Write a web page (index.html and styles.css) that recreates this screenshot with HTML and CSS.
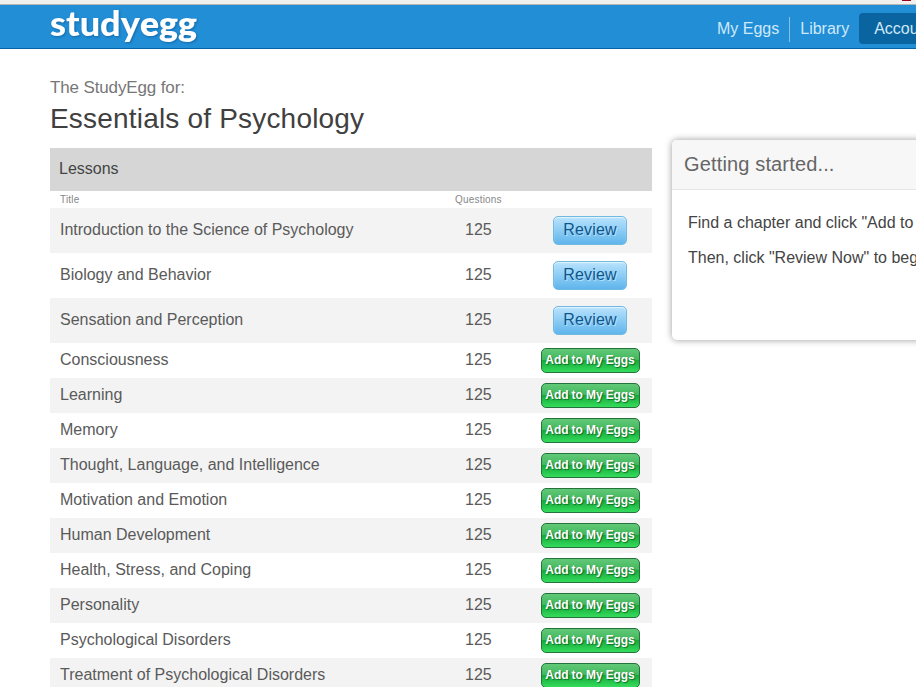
FILE: index.html
```html
<!DOCTYPE html>
<html lang="en">
<head>
<meta charset="utf-8">
<title>Essentials of Psychology - StudyEgg</title>
<link rel="stylesheet" href="styles.css">
</head>
<body>
<div class="chrome"><span class="chrome-mark"></span></div>
<header class="topbar">
  <a class="logo"><svg width="150" height="43" viewBox="0 0 150 43" role="img" aria-label="studyegg">
    <text class="logo-study" x="0" y="31" textLength="90" lengthAdjust="spacingAndGlyphs">study</text>
    <text class="logo-egg" x="90" y="31" textLength="57" lengthAdjust="spacingAndGlyphs">egg</text>
  </svg></a>
  <nav class="nav">
    <a class="nav-link">My Eggs</a>
    <a class="nav-link nav-divided">Library</a>
    <a class="account">Account</a>
  </nav>
</header>
<main class="page">
  <section class="course">
    <p class="kicker">The StudyEgg for:</p>
    <h1>Essentials of Psychology</h1>
    <h2>Lessons</h2>
    <div class="row labels"><span>Title</span><span>Questions</span></div>
    <div class="row tall"><span>Introduction to the Science of Psychology</span><span class="count">125</span><a class="review">Review</a></div>
    <div class="row tall"><span>Biology and Behavior</span><span class="count">125</span><a class="review">Review</a></div>
    <div class="row tall"><span>Sensation and Perception</span><span class="count">125</span><a class="review">Review</a></div>
    <div class="row"><span>Consciousness</span><span class="count">125</span><a class="add">Add to My Eggs</a></div>
    <div class="row"><span>Learning</span><span class="count">125</span><a class="add">Add to My Eggs</a></div>
    <div class="row"><span>Memory</span><span class="count">125</span><a class="add">Add to My Eggs</a></div>
    <div class="row"><span>Thought, Language, and Intelligence</span><span class="count">125</span><a class="add">Add to My Eggs</a></div>
    <div class="row"><span>Motivation and Emotion</span><span class="count">125</span><a class="add">Add to My Eggs</a></div>
    <div class="row"><span>Human Development</span><span class="count">125</span><a class="add">Add to My Eggs</a></div>
    <div class="row"><span>Health, Stress, and Coping</span><span class="count">125</span><a class="add">Add to My Eggs</a></div>
    <div class="row"><span>Personality</span><span class="count">125</span><a class="add">Add to My Eggs</a></div>
    <div class="row"><span>Psychological Disorders</span><span class="count">125</span><a class="add">Add to My Eggs</a></div>
    <div class="row"><span>Treatment of Psychological Disorders</span><span class="count">125</span><a class="add">Add to My Eggs</a></div>
  </section>
  <aside class="panel">
    <h3>Getting started...</h3>
    <div class="panel-body">
      <p>Find a chapter and click "Add to My Eggs"</p>
      <p>Then, click "Review Now" to begin</p>
    </div>
  </aside>
</main>
</body>
</html>
```
FILE: styles.css
```css
* { box-sizing: border-box; }
html, body { height: 687px; overflow: hidden; }
body { margin: 0; background: #fff; font: 16px/20px "Liberation Sans", Arial, sans-serif; color: #5a5a5a; }
h1, h2, h3, p { margin: 0; font-weight: normal; }
.chrome { height: 5px; background: #f0f0ee; border-bottom: 1px solid #b5b5b3; display: flex; justify-content: flex-end; }
.chrome-mark { width: 9px; height: 1px; margin-right: 5px; background: #a00020; }
.topbar { display: flex; justify-content: space-between; height: 44px; padding-left: 50px; background: #218ed6; border-bottom: 1px solid #0763a8; overflow: hidden; }
.logo svg { display: block; overflow: visible; filter: drop-shadow(1px 1px 1px rgba(0, 50, 100, .4)); }
.logo-study { font: 900 34px Lato, sans-serif; fill: #fff; }
.logo-egg { font: 800 34px Lato, sans-serif; fill: #fff; }
.nav { display: flex; flex: none; align-items: flex-start; width: 209px; padding-top: 8px; white-space: nowrap; color: #cfe9fa; }
.nav-link { flex: none; height: 25px; margin-top: 4px; padding: 2px 10px; line-height: 20px; }
.nav-divided { border-left: 1px solid #84c1ea; }
.account { flex: none; width: 90px; height: 31px; padding: 6px 15px; line-height: 19px; background: #0a649f; border-radius: 4px; }
.page { display: flex; align-items: flex-start; padding-left: 50px; }
.course { flex: none; width: 602px; padding-top: 29px; }
.kicker { font-size: 17px; letter-spacing: -.13px; color: #777; }
h1 { height: 50px; padding-top: 3px; font-size: 28px; line-height: 36px; letter-spacing: .19px; color: #404040; }
h2 { height: 43px; padding: 0 9px; font-size: 16px; line-height: 41px; color: #444; background: #d6d6d6; }
.row { display: grid; grid-template-columns: 395px 79px 112px; align-items: center; height: 35px; padding-left: 10px; line-height: 20px; }
.row:nth-of-type(even) { background: #f3f3f3; }
.row.tall { height: 45px; }
.row > span { padding-bottom: 1px; }
.row.labels { height: 17px; font-size: 10px; line-height: 17px; letter-spacing: .2px; color: #888; }
.row.labels > span { padding-bottom: 0; }
.row > .count { padding-left: 10px; }
.row > span:first-child { white-space: nowrap; }
.row .review, .row .add { justify-self: center; }
.review { width: 74px; height: 29px; border: 1px solid #70b9df; border-radius: 5px; background: linear-gradient(#b9e3fd, #5fb5ec); box-shadow: inset 0 1px 1px #e4f5ff; color: #0c568e; text-align: center; line-height: 25px; letter-spacing: .15px; text-shadow: 1px 1px 0 #b5e0fa; }
.add { width: 99px; height: 25px; border: 1px solid #23733b; border-radius: 5px; background: linear-gradient(#62c878 0, #40b75b 49%, #16a93a 50%, #35dc5c 100%); color: #fff; font-size: 12px; font-weight: bold; line-height: 23px; letter-spacing: -.1px; text-align: center; white-space: nowrap; text-shadow: 1px 1px 1px rgba(0, 60, 15, .6); }
.panel { flex: none; width: 310px; height: 200px; margin: 91px -66px 0 20px; border-radius: 5px; background: #fff; box-shadow: 0 0 7px rgba(0, 0, 0, .4); overflow: hidden; }
.panel h3 { height: 50px; padding: 0 12px; border-bottom: 1px solid #e6e6e6; background: #f7f7f7; font-size: 20px; line-height: 48px; letter-spacing: .15px; color: #666; }
.panel-body { padding: 23px 16px; color: #444; white-space: nowrap; }
.panel-body p { margin-bottom: 15px; }
```
